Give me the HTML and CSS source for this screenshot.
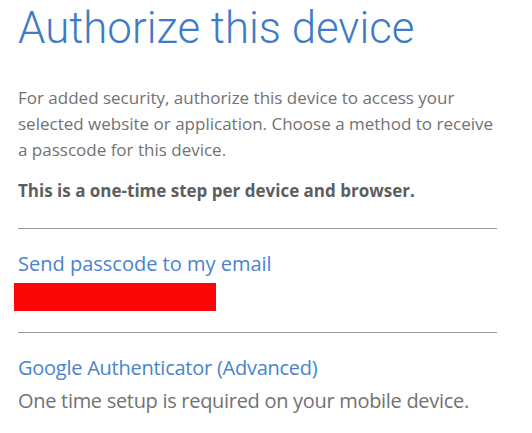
FILE: index.html
```html
<!DOCTYPE html>
<html lang="en">
<head>
<meta charset="utf-8">
<title>Authorize this device</title>
<link rel="stylesheet" href="styles.css">
</head>
<body>
<main class="page">
  <h1 class="title">Authorize this device</h1>
  <p class="intro">For added security, authorize this device to access your selected website or application. Choose a method to receive a passcode for this device.</p>
  <p class="note">This is a one-time step per device and browser.</p>
  <section class="option">
    <a class="option-link" href="#">Send passcode to my email</a>
    <div class="redacted"></div>
  </section>
  <section class="option">
    <a class="option-link" href="#">Google Authenticator (Advanced)</a>
    <p class="option-desc">One time setup is required on your mobile device.</p>
  </section>
</main>
</body>
</html>
```
FILE: styles.css
```css
html, body {
  margin: 0;
  padding: 0;
  background: #ffffff;
}
.page {
  width: 479px;
  padding: 0 0 0 18px;
  font-family: "Open Sans", "Noto Sans", sans-serif;
}
.title {
  margin: 0;
  font-family: Roboto, sans-serif;
  font-weight: 300;
  font-size: 43.8px;
  line-height: 56px;
  color: #3f7cc4;
}
.intro {
  margin: 29px 0 0 0;
  font-size: 17px;
  line-height: 26px;
  color: #727272;
}
.note {
  margin: 15px 0 0 0;
  font-size: 17px;
  font-weight: 700;
  line-height: 26px;
  color: #5e5e5e;
}
.option {
  border-top: 1px solid #9a9a9a;
  margin-top: 24px;
  padding-top: 22px;
}
.option + .option {
  margin-top: 21px;
}
.option-link {
  display: block;
  font-size: 20px;
  line-height: 26px;
  color: #4a84cc;
  text-decoration: none;
}
.option + .option .option-link {
  letter-spacing: -0.25px;
}
.redacted {
  width: 202px;
  height: 28px;
  margin: 6px 0 0 -4px;
  background: #fb0707;
}
.option-desc {
  margin: 6px 0 0 0;
  font-size: 20px;
  line-height: 28px;
  letter-spacing: -0.3px;
  color: #727272;
}
```
